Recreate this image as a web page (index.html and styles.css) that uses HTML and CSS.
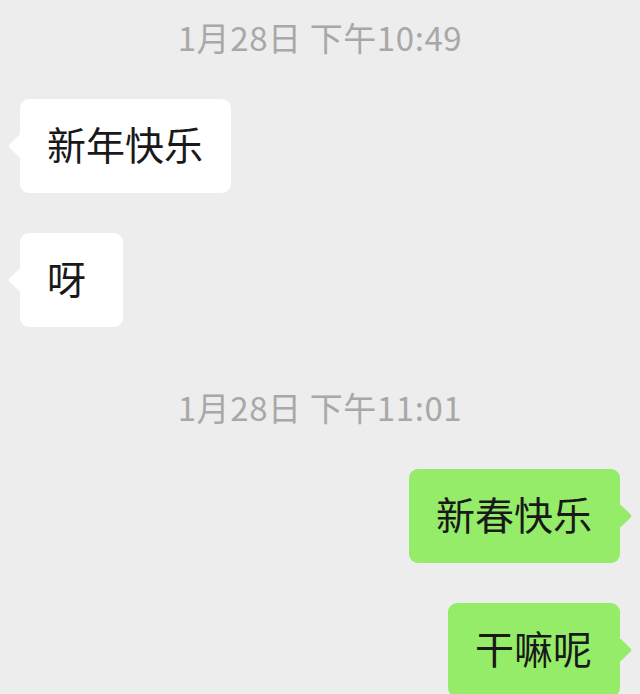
FILE: index.html
```html
<!DOCTYPE html>
<html lang="zh-CN">
<head>
    <meta charset="UTF-8">
    <meta name="viewport" content="width=device-width, initial-scale=1.0">
    <title>聊天</title>
    <link rel="stylesheet" href="styles.css">
</head>
<body>

    <div id="chat">
        <div class="time">1月28日 下午10:49</div>

        <div class="msg left">
            <div class="bubble">新年快乐</div>
        </div>
        <div class="msg left">
            <div class="bubble">呀</div>
        </div>

        <div class="time">1月28日 下午11:01</div>

        <div class="msg right">
            <div class="bubble">新春快乐</div>
        </div>
        <div class="msg right">
            <div class="bubble">干嘛呢</div>
        </div>
    </div>

</body>
</html>
```

FILE: styles.css
```css
body {
    font-family: "Noto Sans CJK SC", "Noto Sans", sans-serif;
    margin: 0;
    padding: 0;
    background-color: #ededed;
    height: 694px;
    overflow: hidden;
}

#chat {
    padding: 0 20px;
}

.time {
    text-align: center;
    color: #a8a8a8;
    font-size: 33px;
    letter-spacing: 0.6px;
    line-height: 40px;
    margin: 60px 0 42px;
}

.time:first-child {
    margin-top: 17px;
}

.msg {
    display: flex;
    margin-bottom: 40px;
}

.msg.right {
    justify-content: flex-end;
}

.bubble {
    position: relative;
    min-width: 103px;
    box-sizing: border-box;
    padding: 25px 28px 30px 27px;
    font-size: 39px;
    line-height: 39px;
    color: #191919;
    background-color: white;
    border-radius: 9px;
}

.right .bubble {
    background-color: #95ec69;
}

/* little arrow beside the bubble */
.bubble::before {
    content: "";
    position: absolute;
    top: 50%;
    width: 17px;
    height: 17px;
    background-color: inherit;
    border-radius: 2px;
    transform: translate(-50%, -50%) rotate(45deg);
}

.left .bubble::before {
    left: 0;
}

.right .bubble::before {
    left: 100%;
}
```
